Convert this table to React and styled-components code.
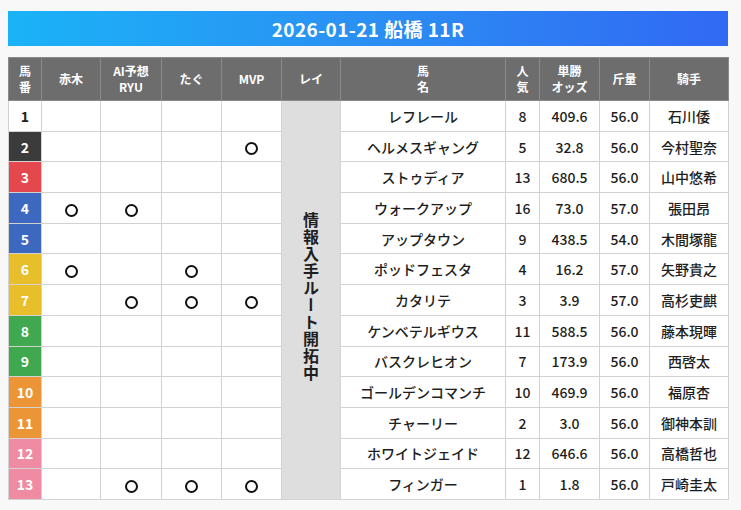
import React from "react";
import styled, { createGlobalStyle } from "styled-components";

const GlobalStyle = createGlobalStyle`
  body {
    margin: 0;
    background: #f8f8f8;
    font-family: "Noto Sans CJK JP", "Noto Sans", sans-serif;
  }
`;

const Page = styled.div`
  padding: 11px 8px 0 8px;
  width: 720px;
`;

const TitleBar = styled.div`
  height: 35px;
  display: flex;
  align-items: center;
  justify-content: center;
  background: linear-gradient(90deg, #1ab3f7 0%, #2b8ff3 50%, #3169f3 100%);
  color: #fff;
  font-size: 19px;
  font-weight: 700;
  letter-spacing: 0.4px;
`;

const Table = styled.table`
  margin-top: 11px;
  width: 720px;
  border-collapse: collapse;
  table-layout: fixed;
  background: #fff;
`;

const Th = styled.th`
  height: 42px;
  padding: 0;
  background: #6d6d6d;
  color: #fff;
  font-size: 12px;
  font-weight: 700;
  line-height: 16px;
  border: 1px solid #8a8a8a;
  text-align: center;
`;

const Row = styled.tr`
  height: 30.7px;
`;

const Td = styled.td`
  padding: 0;
  border: 1px solid #d2d2d2;
  text-align: center;
  font-size: 14px;
  font-weight: 500;
  color: #1e1e1e;
  white-space: nowrap;
`;

const GATE = {
  1: ["#ffffff", "#1e1e1e"],
  2: ["#3b3b3b", "#ffffff"],
  3: ["#e4474d", "#ffffff"],
  4: ["#3d68c0", "#ffffff"],
  5: ["#e8bf2b", "#ffffff"],
  6: ["#40a950", "#ffffff"],
  7: ["#ec9536", "#ffffff"],
  8: ["#ef8ba2", "#ffffff"],
};

const Num = styled(Td)`
  background: ${(p) => GATE[p.$gate][0]};
  color: ${(p) => GATE[p.$gate][1]};
  font-weight: 700;
  font-size: 14px;
`;

const Mark = styled.span`
  display: inline-block;
  width: 9px;
  height: 9px;
  border: 2px solid #111;
  border-radius: 50%;
  vertical-align: middle;
`;

const Ray = styled.td`
  padding: 0;
  background: #dedede;
  border: 1px solid #d2d2d2;
  text-align: center;
  vertical-align: middle;
`;

const VerticalText = styled.span`
  display: inline-block;
  writing-mode: vertical-rl;
  font-size: 16px;
  font-weight: 700;
  color: #1e1e1e;
  letter-spacing: 1px;
`;

const widths = [33, 59, 61, 60, 60, 59, 165, 34, 60, 50, 79];

const horses = [
  [1, 1, "", "", "", "", "レフレール", 8, "409.6", "56.0", "石川倭"],
  [2, 2, "", "", "", "o", "ヘルメスギャング", 5, "32.8", "56.0", "今村聖奈"],
  [3, 3, "", "", "", "", "ストゥディア", 13, "680.5", "56.0", "山中悠希"],
  [4, 4, "o", "o", "", "", "ウォークアップ", 16, "73.0", "57.0", "張田昂"],
  [5, 4, "", "", "", "", "アップタウン", 9, "438.5", "54.0", "木間塚龍"],
  [6, 5, "o", "", "o", "", "ポッドフェスタ", 4, "16.2", "57.0", "矢野貴之"],
  [7, 5, "", "o", "o", "o", "カタリテ", 3, "3.9", "57.0", "高杉吏麒"],
  [8, 6, "", "", "", "", "ケンベテルギウス", 11, "588.5", "56.0", "藤本現暉"],
  [9, 6, "", "", "", "", "バスクレヒオン", 7, "173.9", "56.0", "西啓太"],
  [10, 7, "", "", "", "", "ゴールデンコマンチ", 10, "469.9", "56.0", "福原杏"],
  [11, 7, "", "", "", "", "チャーリー", 2, "3.0", "56.0", "御神本訓"],
  [12, 8, "", "", "", "", "ホワイトジェイド", 12, "646.6", "56.0", "高橋哲也"],
  [13, 8, "", "o", "o", "o", "フィンガー", 1, "1.8", "56.0", "戸崎圭太"],
];

const cell = (v) => (v === "o" ? <Mark /> : v);

export default function App() {
  return (
    <Page>
      <GlobalStyle />
      <TitleBar>2026-01-21 船橋 11R</TitleBar>
      <Table>
        <colgroup>
          {widths.map((w, i) => (
            <col key={i} style={{ width: w }} />
          ))}
        </colgroup>
        <thead>
          <tr>
            <Th>馬<br />番</Th>
            <Th>赤木</Th>
            <Th>AI予想<br />RYU</Th>
            <Th>たぐ</Th>
            <Th>MVP</Th>
            <Th>レイ</Th>
            <Th>馬<br />名</Th>
            <Th>人<br />気</Th>
            <Th>単勝<br />オッズ</Th>
            <Th>斤量</Th>
            <Th>騎手</Th>
          </tr>
        </thead>
        <tbody>
          {horses.map((h, i) => (
            <Row key={h[0]}>
              <Num $gate={h[1]}>{h[0]}</Num>
              <Td>{cell(h[2])}</Td>
              <Td>{cell(h[3])}</Td>
              <Td>{cell(h[4])}</Td>
              <Td>{cell(h[5])}</Td>
              {i === 0 && (
                <Ray rowSpan={13}>
                  <VerticalText>情報入手ルート開拓中</VerticalText>
                </Ray>
              )}
              <Td>{h[6]}</Td>
              <Td>{h[7]}</Td>
              <Td>{h[8]}</Td>
              <Td>{h[9]}</Td>
              <Td>{h[10]}</Td>
            </Row>
          ))}
        </tbody>
      </Table>
    </Page>
  );
}
